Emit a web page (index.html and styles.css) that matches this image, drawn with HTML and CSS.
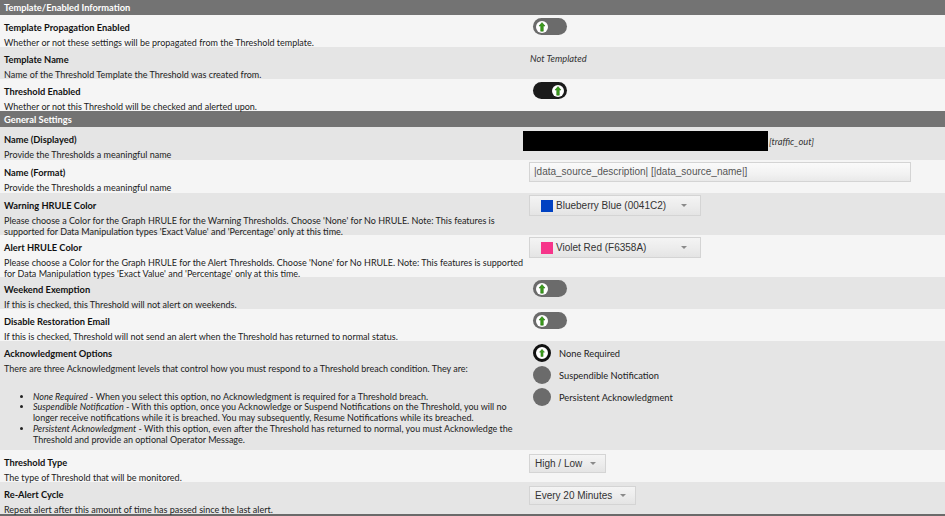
FILE: index.html
```html
<!DOCTYPE html>
<html>
<head>
<meta charset="utf-8">
<link rel="stylesheet" href="styles.css">
</head>
<body>
<div class="form">
  <div class="section">Template/Enabled Information</div>

  <div class="row light">
    <div class="info">
      <div class="label">Template Propagation Enabled</div>
      <div class="desc">Whether or not these settings will be propagated from the Threshold template.</div>
    </div>
    <div class="field">
      <span class="toggle off"><svg class="knob" viewBox="0 0 12 12"><circle cx="6" cy="6" r="6" fill="#fff"/><path d="M6 1.6 L9 5 L7.3 5 L7.3 10.2 L4.7 10.2 L4.7 5 L3 5 Z" fill="#3c9c1c" stroke="#1f6b0c" stroke-width="0.5"/></svg></span>
    </div>
  </div>

  <div class="row gray">
    <div class="info">
      <div class="label">Template Name</div>
      <div class="desc">Name of the Threshold Template the Threshold was created from.</div>
    </div>
    <div class="field">
      <span class="static">Not Templated</span>
    </div>
  </div>

  <div class="row light">
    <div class="info">
      <div class="label">Threshold Enabled</div>
      <div class="desc">Whether or not this Threshold will be checked and alerted upon.</div>
    </div>
    <div class="field">
      <span class="toggle on"><svg class="knob" viewBox="0 0 12 12"><circle cx="6" cy="6" r="6" fill="#fff"/><path d="M6 1.6 L9 5 L7.3 5 L7.3 10.2 L4.7 10.2 L4.7 5 L3 5 Z" fill="#3c9c1c" stroke="#1f6b0c" stroke-width="0.5"/></svg></span>
    </div>
  </div>

  <div class="section tall">General Settings</div>

  <div class="row gray r33">
    <div class="info">
      <div class="label">Name (Displayed)</div>
      <div class="desc">Provide the Thresholds a meaningful name</div>
    </div>
    <div class="field">
      <div class="displayed"><span class="redact"></span><span class="static suffix">[traffic_out]</span></div>
    </div>
  </div>

  <div class="row light r33">
    <div class="info">
      <div class="label">Name (Format)</div>
      <div class="desc">Provide the Thresholds a meaningful name</div>
    </div>
    <div class="field">
      <div class="textbox">|data_source_description| [|data_source_name|]</div>
    </div>
  </div>

  <div class="row gray">
    <div class="info">
      <div class="label">Warning HRULE Color</div>
      <div class="desc">Please choose a Color for the Graph HRULE for the Warning Thresholds. Choose 'None' for No HRULE. Note: This features is supported for Data Manipulation types 'Exact Value' and 'Percentage' only at this time.</div>
    </div>
    <div class="field">
      <div class="select color"><span class="swatch blue"></span><span class="stext">Blueberry Blue (0041C2)</span><span class="caret"></span></div>
    </div>
  </div>

  <div class="row light">
    <div class="info">
      <div class="label">Alert HRULE Color</div>
      <div class="desc">Please choose a Color for the Graph HRULE for the Alert Thresholds. Choose 'None' for No HRULE. Note: This features is supported for Data Manipulation types 'Exact Value' and 'Percentage' only at this time.</div>
    </div>
    <div class="field">
      <div class="select color"><span class="swatch pink"></span><span class="stext">Violet Red (F6358A)</span><span class="caret"></span></div>
    </div>
  </div>

  <div class="row gray">
    <div class="info">
      <div class="label">Weekend Exemption</div>
      <div class="desc">If this is checked, this Threshold will not alert on weekends.</div>
    </div>
    <div class="field">
      <span class="toggle off"><svg class="knob" viewBox="0 0 12 12"><circle cx="6" cy="6" r="6" fill="#fff"/><path d="M6 1.6 L9 5 L7.3 5 L7.3 10.2 L4.7 10.2 L4.7 5 L3 5 Z" fill="#3c9c1c" stroke="#1f6b0c" stroke-width="0.5"/></svg></span>
    </div>
  </div>

  <div class="row light">
    <div class="info">
      <div class="label">Disable Restoration Email</div>
      <div class="desc">If this is checked, Threshold will not send an alert when the Threshold has returned to normal status.</div>
    </div>
    <div class="field">
      <span class="toggle off"><svg class="knob" viewBox="0 0 12 12"><circle cx="6" cy="6" r="6" fill="#fff"/><path d="M6 1.6 L9 5 L7.3 5 L7.3 10.2 L4.7 10.2 L4.7 5 L3 5 Z" fill="#3c9c1c" stroke="#1f6b0c" stroke-width="0.5"/></svg></span>
    </div>
  </div>

  <div class="row gray ack">
    <div class="info">
      <div class="label">Acknowledgment Options</div>
      <div class="desc">There are three Acknowledgment levels that control how you must respond to a Threshold breach condition. They are:
        <ul class="levels">
          <li><i>None Required</i> - When you select this option, no Acknowledgment is required for a Threshold breach.</li>
          <li><i>Suspendible Notification</i> - With this option, once you Acknowledge or Suspend Notifications on the Threshold, you will no longer receive notifications while it is breached. You may subsequently, Resume Notifications while its breached.</li>
          <li><i>Persistent Acknowledgment</i> - With this option, even after the Threshold has returned to normal, you must Acknowledge the Threshold and provide an optional Operator Message.</li>
        </ul>
      </div>
    </div>
    <div class="field">
      <div class="radios">
        <div class="radio-item"><span class="radio checked"><svg class="rknob" viewBox="0 0 12 12"><circle cx="6" cy="6" r="6" fill="#fff"/><path d="M6 1.6 L9 5 L7.3 5 L7.3 10.2 L4.7 10.2 L4.7 5 L3 5 Z" fill="#3c9c1c" stroke="#1f6b0c" stroke-width="0.5"/></svg></span><span class="rlabel">None Required</span></div>
        <div class="radio-item"><span class="radio"></span><span class="rlabel">Suspendible Notification</span></div>
        <div class="radio-item"><span class="radio"></span><span class="rlabel">Persistent Acknowledgment</span></div>
      </div>
    </div>
  </div>

  <div class="row light">
    <div class="info">
      <div class="label">Threshold Type</div>
      <div class="desc">The type of Threshold that will be monitored.</div>
    </div>
    <div class="field">
      <div class="select plain"><span class="stext">High / Low</span><span class="caret"></span></div>
    </div>
  </div>

  <div class="row gray">
    <div class="info">
      <div class="label">Re-Alert Cycle</div>
      <div class="desc">Repeat alert after this amount of time has passed since the last alert.</div>
    </div>
    <div class="field">
      <div class="select plain"><span class="stext">Every 20 Minutes</span><span class="caret"></span></div>
    </div>
  </div>

  <div class="section next"></div>
</div>
</body>
</html>
```
FILE: styles.css
```css
html, body {
  margin: 0;
  padding: 0;
  background: #f5f5f5;
  overflow: hidden;
}

.form {
  font-family: "Lato", "Open Sans", sans-serif;
  font-size: 9px;
  color: #1a1a1a;
}

.section {
  background: #737373;
  color: #fff;
  font-weight: bold;
  font-size: 9.3px;
  height: 15px;
  line-height: 15px;
  padding-left: 4px;
}

.section.tall {
  height: 16px;
  line-height: 17px;
}

.section.next {
  height: 15px;
  background: #6a6a6a;
}

.row {
  display: grid;
  grid-template-columns: 525px 1fr;
  min-height: 32px;
}

.row.r33 {
  min-height: 33px;
}

.row.light {
  background: #f5f5f5;
}

.row.gray {
  background: #e5e5e5;
}

.info {
  padding: 5px 0 0 4px;
  margin-bottom: -2px;
}

.label {
  font-weight: bold;
  font-size: 9.3px;
  line-height: 15px;
  color: #111;
}

.desc {
  margin-top: 3px;
  line-height: 10.5px;
  color: #222;
}

.levels {
  margin: 17px 0 6.5px 0;
  padding-left: 29px;
}

.levels li {
  line-height: 10.8px;
}

.field {
  padding: 3px 0 0 4px;
}

/* toggle switches */
.toggle {
  display: flex;
  align-items: center;
  width: 34px;
  height: 17px;
  border-radius: 9px;
  margin-left: 4px;
  box-sizing: border-box;
  padding: 0 3px;
}

.toggle.off {
  background: #6b6b6b;
  justify-content: flex-start;
}

.toggle.on {
  background: #1a1a1a;
  justify-content: flex-end;
}

.knob {
  width: 12px;
  height: 12px;
  display: block;
}

.static {
  font-style: italic;
  font-size: 9.3px;
  line-height: 15px;
  color: #333;
  margin-left: 1px;
  display: inline-block;
  margin-top: 1px;
}

.displayed {
  display: flex;
  align-items: center;
  margin-top: 1px;
  margin-left: -6px;
}

.redact {
  display: block;
  width: 245px;
  height: 20px;
  background: #000;
}

.static.suffix {
  margin: 0 0 0 1px;
}

.textbox {
  margin-top: -1px;
  width: 382px;
  height: 20px;
  box-sizing: border-box;
  border: 1px solid #d4d4d4;
  background: linear-gradient(#fafafa, #f2f2f2 60%, #e9e9e9);
  font-family: "Liberation Sans", Arial, sans-serif;
  font-size: 10px;
  line-height: 18px;
  color: #555;
  padding-left: 4px;
  white-space: nowrap;
}

/* selects */
.select {
  display: inline-flex;
  align-items: center;
  box-sizing: border-box;
  border: 1px solid #d4d4d4;
  background: linear-gradient(#f4f4f4, #ececec 55%, #e4e4e4);
  font-family: "Liberation Sans", Arial, sans-serif;
  font-size: 10px;
  color: #333;
  white-space: nowrap;
}

.select.color {
  margin-top: -1px;
  width: 172px;
  height: 21px;
  padding-left: 11px;
}

.select.plain {
  margin-top: 1px;
  height: 19px;
  padding: 0 9px 0 5px;
}

.swatch {
  width: 12px;
  height: 12px;
  display: block;
  margin-right: 3px;
}

.swatch.blue {
  background: #0041c2;
}

.swatch.pink {
  background: #f6358a;
}

.caret {
  width: 0;
  height: 0;
  border-left: 3px solid transparent;
  border-right: 3px solid transparent;
  border-top: 3px solid #8a8a8a;
  margin-left: 8px;
}

.select.color .caret {
  margin-left: auto;
  margin-right: 13px;
}

/* radios */
.radios {
  display: flex;
  flex-direction: column;
  gap: 4px;
  margin-left: 4px;
}

.radio-item {
  display: flex;
  align-items: center;
  height: 18px;
}

.radio {
  width: 18px;
  height: 18px;
  border-radius: 50%;
  background: #6b6b6b;
  box-sizing: border-box;
  display: flex;
  align-items: center;
  justify-content: center;
  flex: none;
}

.radio.checked {
  background: #fff;
  border: 3px solid #111;
}

.rknob {
  width: 10px;
  height: 10px;
  display: block;
}

.rlabel {
  margin-left: 8px;
  font-size: 9.3px;
  color: #222;
}
```
